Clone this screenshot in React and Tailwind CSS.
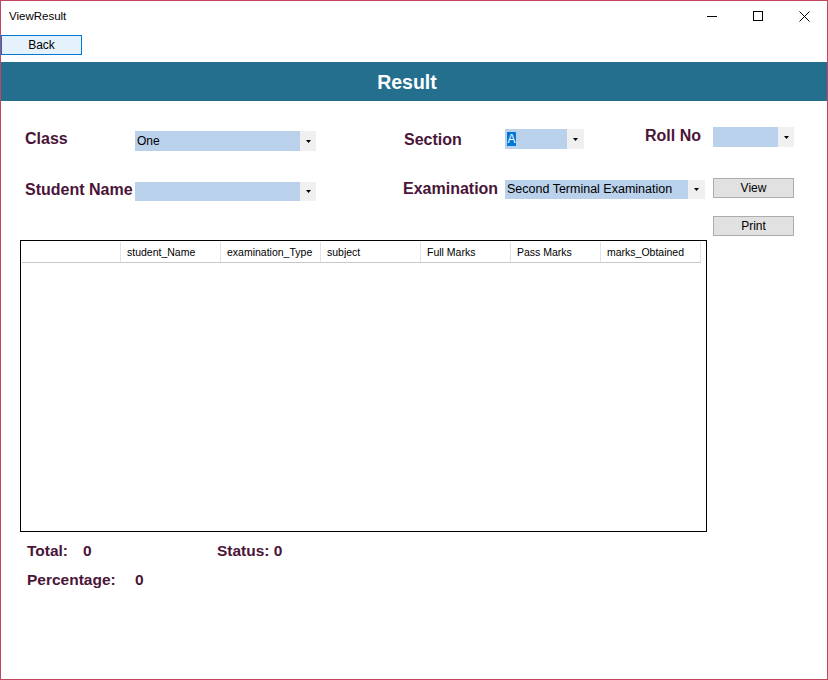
import React from "react";

const Arrow = () => (
  <svg width="5" height="3" viewBox="0 0 5 3" className="block">
    <path d="M0 0H5L2.5 3Z" fill="#000" />
  </svg>
);

function Combo({ blue, btn, h = 20, children }) {
  return (
    <div className="flex" style={{ height: h }}>
      <div
        className="bg-[#b9d1ea] flex items-center pl-[2px] text-[12.5px] text-black overflow-hidden whitespace-nowrap"
        style={{ width: blue }}
      >
        {children}
      </div>
      <div
        className="bg-[#f0f0f0] flex items-center justify-center"
        style={{ width: btn }}
      >
        <Arrow />
      </div>
    </div>
  );
}

const Label = ({ children, className = "" }) => (
  <div
    className={
      "text-[16px] leading-[20px] font-bold text-[#4a1538] whitespace-nowrap " +
      className
    }
  >
    {children}
  </div>
);

const cols = [
  { w: 99, t: "" },
  { w: 100, t: "student_Name" },
  { w: 100, t: "examination_Type" },
  { w: 100, t: "subject" },
  { w: 90, t: "Full Marks" },
  { w: 90, t: "Pass Marks" },
  { w: 100, t: "marks_Obtained" },
];

export default function App() {
  return (
    <div
      className="w-[828px] h-[680px] border border-[#c4455f] bg-white flex flex-col overflow-hidden"
      style={{ fontFamily: '"Liberation Sans", Arial, sans-serif' }}
    >
      {/* Title bar */}
      <div className="h-[30px] flex items-center shrink-0">
        <div className="pl-[8px] text-[11.5px] text-black leading-none pt-[1px]">
          ViewResult
        </div>
        <div className="ml-auto flex h-full">
          <div className="w-[46px] h-full flex items-center justify-center">
            <svg width="10" height="10" viewBox="0 0 10 10">
              <path d="M0 5.5H10" stroke="#000" strokeWidth="1" />
            </svg>
          </div>
          <div className="w-[46px] h-full flex items-center justify-center">
            <svg width="10" height="10" viewBox="0 0 10 10">
              <rect x="0.5" y="0.5" width="9" height="9" fill="none" stroke="#000" strokeWidth="1" />
            </svg>
          </div>
          <div className="w-[46px] h-full flex items-center justify-center">
            <svg width="11" height="11" viewBox="0 0 11 11">
              <path d="M0.5 0.5L10.5 10.5M10.5 0.5L0.5 10.5" stroke="#000" strokeWidth="1" />
            </svg>
          </div>
        </div>
      </div>

      {/* Back row */}
      <div className="h-[31px] shrink-0 pt-[4px]">
        <button className="w-[81px] h-[20px] bg-[#e5f1fb] border border-[#0078d7] text-[12px] text-black flex items-center justify-center leading-none">
          Back
        </button>
      </div>

      {/* Header */}
      <div className="h-[39px] shrink-0 bg-[#246f8e] flex items-center justify-center pr-[14px] pt-[3px]">
        <span className="text-white font-bold text-[19.5px] leading-none">
          Result
        </span>
      </div>

      {/* Row 1 */}
      <div className="h-[50px] shrink-0 flex items-start">
        <Label className="ml-[24px] w-[110px] mt-[28px]">Class</Label>
        <div className="mt-[30px]">
          <Combo blue={165} btn={16}>
            <span className="text-[12px]">One</span>
          </Combo>
        </div>
        <Label className="ml-[88px] w-[101px] mt-[29px]">Section</Label>
        <div className="mt-[28px]">
          <Combo blue={62} btn={17}>
            <span className="bg-[#0078d7] text-white h-[14px] w-[9px] flex items-center justify-center text-[12px]">
              A
            </span>
          </Combo>
        </div>
        <Label className="ml-[61px] w-[68px] mt-[25px]">Roll No</Label>
        <div className="mt-[26px]">
          <Combo blue={65} btn={16} />
        </div>
      </div>

      {/* Row 2 */}
      <div className="h-[89px] shrink-0 flex items-start">
        <Label className="ml-[24px] w-[110px] mt-[29px]">Student Name</Label>
        <div className="mt-[31px]">
          <Combo blue={165} btn={16} h={19} />
        </div>
        <Label className="ml-[87px] w-[102px] mt-[28px]">Examination</Label>
        <div className="mt-[29px]">
          <Combo blue={183} btn={17} h={19}>
            Second Terminal Examination
          </Combo>
        </div>
        <div className="ml-[8px] mt-[27px] flex flex-col gap-[18px]">
          <button className="w-[81px] h-[20px] bg-[#e1e1e1] border border-[#adadad] text-[12px] text-black flex items-center justify-center leading-none">
            View
          </button>
          <button className="w-[81px] h-[20px] bg-[#e1e1e1] border border-[#adadad] text-[12px] text-black flex items-center justify-center leading-none">
            Print
          </button>
        </div>
      </div>

      {/* Grid */}
      <div className="ml-[19px] w-[687px] h-[292px] shrink-0 border border-black bg-white pt-[1px] pl-[1px]">
        <div className="flex h-[21px] w-[679px] border-b border-[#c8c8c8]">
          {cols.map((c, i) => (
            <div
              key={i}
              className="h-full border-r border-[#e3e3e3] flex items-center pl-[6px] pt-[1px] text-[10.5px] text-black whitespace-nowrap"
              style={{ width: c.w }}
            >
              {c.t}
            </div>
          ))}
        </div>
      </div>

      {/* Totals */}
      <div className="mt-[9px] flex text-[15.5px] leading-[20px] font-bold text-[#4a1538]">
        <span className="ml-[26px] w-[56px]">Total:</span>
        <span className="w-[134px]">0</span>
        <span>Status: 0</span>
      </div>
      <div className="mt-[9px] flex text-[15.5px] leading-[20px] font-bold text-[#4a1538]">
        <span className="ml-[26px] w-[108px]">Percentage:</span>
        <span>0</span>
      </div>
    </div>
  );
}
